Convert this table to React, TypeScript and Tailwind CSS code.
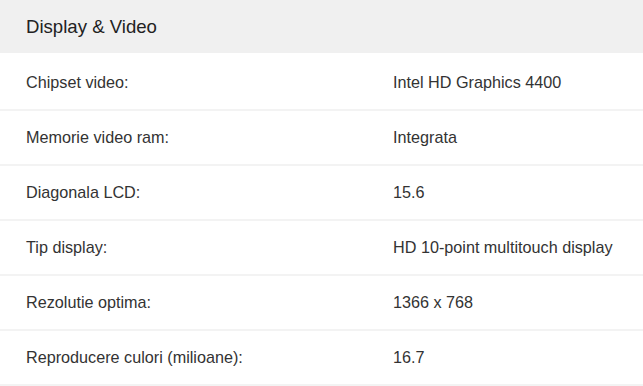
import React from "react";

const specs: [string, string][] = [
  ["Chipset video:", "Intel HD Graphics 4400"],
  ["Memorie video ram:", "Integrata"],
  ["Diagonala LCD:", "15.6"],
  ["Tip display:", "HD 10-point multitouch display"],
  ["Rezolutie optima:", "1366 x 768"],
  ["Reproducere culori (milioane):", "16.7"],
];

const App: React.FC = () => {
  return (
    <div className="w-[643px] h-[386px] overflow-hidden bg-white font-['Liberation_Sans',Arial,sans-serif]">
      <div className="h-[53px] mb-[3px] bg-[#f0f0f0] flex items-center pl-[26px] text-[18.6px] text-[#222]">
        Display &amp; Video
      </div>
      {specs.map(([label, value]) => (
        <div
          key={label}
          className="h-[55px] border-b-2 border-[#f3f3f3] flex items-center text-[16.2px] text-[#333]"
        >
          <div className="w-[393px] pl-[26px]">{label}</div>
          <div>{value}</div>
        </div>
      ))}
    </div>
  );
};

export default App;
